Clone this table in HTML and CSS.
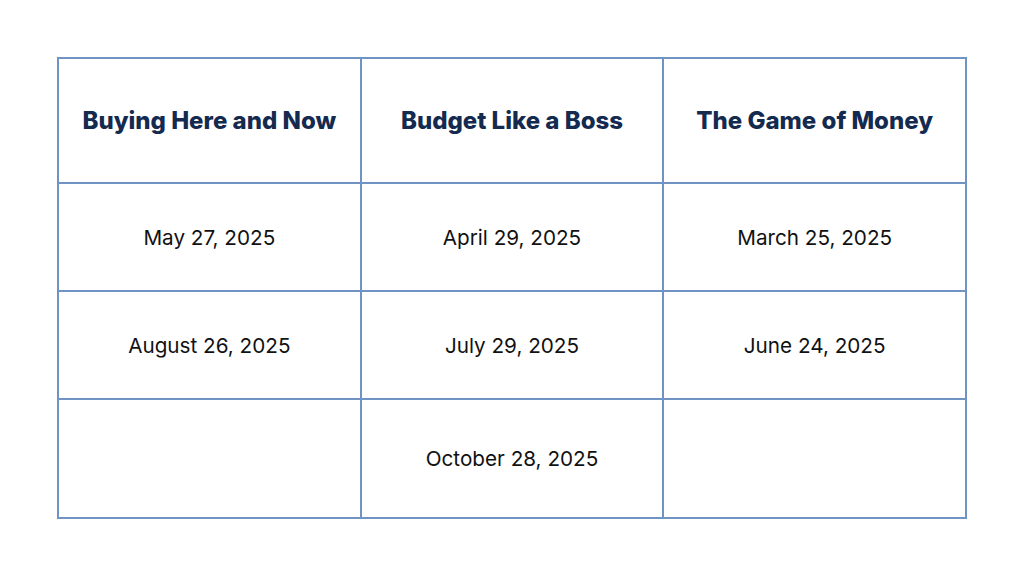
FILE: index.html
```html
<!DOCTYPE html>
<html lang="en">
<head>
<meta charset="utf-8">
<link rel="stylesheet" href="styles.css">
</head>
<body>
<div class="page">
<table class="schedule">
  <thead>
    <tr class="head-row">
      <th>Buying Here and Now</th>
      <th>Budget Like a Boss</th>
      <th>The Game of Money</th>
    </tr>
  </thead>
  <tbody>
    <tr class="row">
      <td>May 27, 2025</td>
      <td>April 29, 2025</td>
      <td>March 25, 2025</td>
    </tr>
    <tr class="row">
      <td>August 26, 2025</td>
      <td>July 29, 2025</td>
      <td>June 24, 2025</td>
    </tr>
    <tr class="row last">
      <td></td>
      <td>October 28, 2025</td>
      <td></td>
    </tr>
  </tbody>
</table>
</div>
</body>
</html>
```

FILE: styles.css
```css
html, body {
  margin: 0;
  padding: 0;
  background: #ffffff;
}
.page {
  width: 1024px;
  height: 576px;
  padding: 57px 0 0 57px;
  box-sizing: border-box;
}
.schedule {
  border-collapse: collapse;
  width: 910px;
  table-layout: fixed;
  font-family: Inter, "Open Sans", sans-serif;
}
.schedule th,
.schedule td {
  border: 2px solid #6f93c3;
  text-align: center;
  vertical-align: middle;
  padding: 0;
}
.schedule th {
  height: 123px;
  font-size: 24px;
  font-weight: 800;
  color: #142a4f;
}
.schedule td {
  height: 106px;
  font-size: 20.7px;
  font-weight: 400;
  color: #111111;
}
.schedule .last td {
  height: 117px;
}
```
